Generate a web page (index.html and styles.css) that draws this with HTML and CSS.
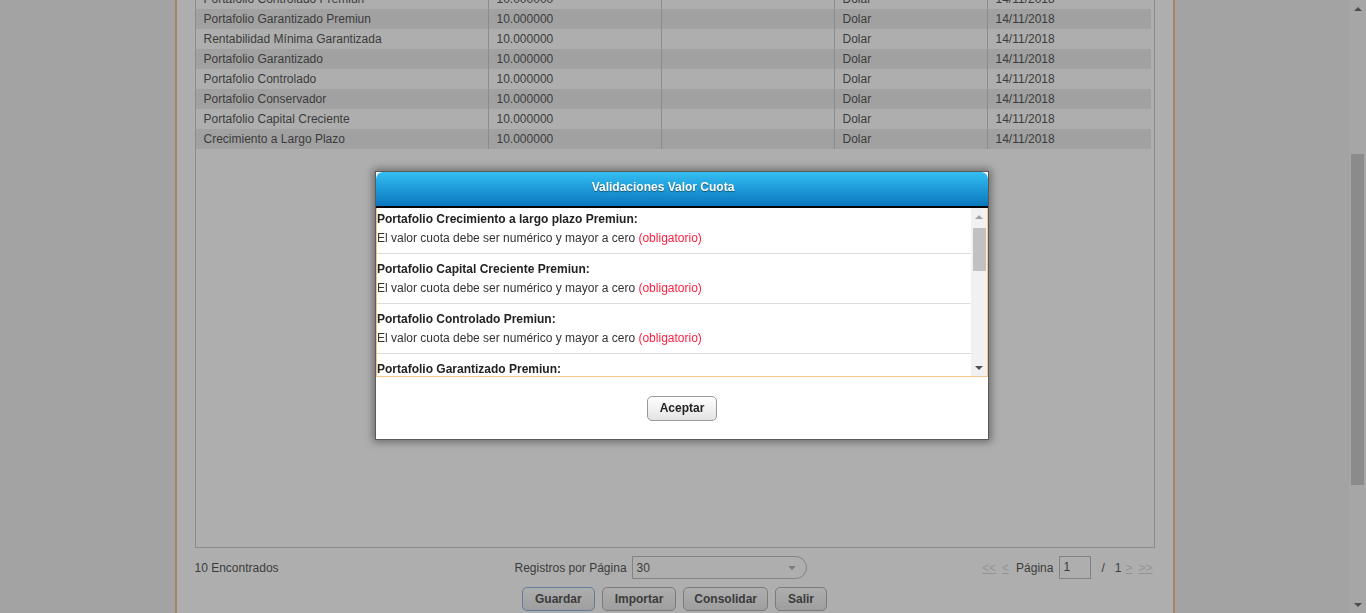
FILE: index.html
```html
<!DOCTYPE html>
<html lang="es">
<head>
<meta charset="utf-8">
<title>Valor Cuota</title>
<link rel="stylesheet" href="styles.css">
</head>
<body>
<div class="screen">
  <div class="viewport">
    <div class="container">
      <div class="grid-box">
        <table class="grid">
          <colgroup>
            <col class="c1"><col class="c2"><col class="c3"><col class="c4"><col class="c5">
          </colgroup>
          <tbody>
            <tr><td>Portafolio Controlado Premiun</td><td>10.000000</td><td></td><td>Dolar</td><td>14/11/2018</td></tr>
            <tr><td>Portafolio Garantizado Premiun</td><td>10.000000</td><td></td><td>Dolar</td><td>14/11/2018</td></tr>
            <tr><td>Rentabilidad Mínima Garantizada</td><td>10.000000</td><td></td><td>Dolar</td><td>14/11/2018</td></tr>
            <tr><td>Portafolio Garantizado</td><td>10.000000</td><td></td><td>Dolar</td><td>14/11/2018</td></tr>
            <tr><td>Portafolio Controlado</td><td>10.000000</td><td></td><td>Dolar</td><td>14/11/2018</td></tr>
            <tr><td>Portafolio Conservador</td><td>10.000000</td><td></td><td>Dolar</td><td>14/11/2018</td></tr>
            <tr><td>Portafolio Capital Creciente</td><td>10.000000</td><td></td><td>Dolar</td><td>14/11/2018</td></tr>
            <tr><td>Crecimiento a Largo Plazo</td><td>10.000000</td><td></td><td>Dolar</td><td>14/11/2018</td></tr>
          </tbody>
        </table>
      </div>

      <div class="bar">
        <div class="found">10 Encontrados</div>
        <div class="perpage">
          <span>Registros por Página</span>
          <div class="select"><span>30</span><span class="caret"></span></div>
        </div>
        <div class="pager">
          <a class="pl">&lt;&lt;</a>
          <a class="pl">&lt;</a>
          <span class="plabel">Página</span>
          <span class="pinput">1</span>
          <span class="slash">/</span>
          <span class="ptotal">1</span>
          <a class="pl">&gt;</a>
          <a class="pl">&gt;&gt;</a>
        </div>
      </div>

      <div class="actions">
        <button class="btn focus">Guardar</button>
        <button class="btn">Importar</button>
        <button class="btn btn-narrow">Consolidar</button>
        <button class="btn">Salir</button>
      </div>
    </div>
  </div>
  <div class="vscroll">
    <div class="vs-btn"><span class="arr-up"></span></div>
    <div class="vs-track"><div class="vs-thumb"></div></div>
    <div class="vs-btn"><span class="arr-down"></span></div>
  </div>
</div>

<div class="overlay"></div>

<div class="modal">
  <div class="modal-head">Validaciones Valor Cuota</div>
  <div class="modal-list">
    <div class="list-items">
      <div class="item"><div class="it">Portafolio Crecimiento a largo plazo Premiun:</div><div class="im">El valor cuota debe ser numérico y mayor a cero <span class="req">(obligatorio)</span></div></div>
      <div class="item"><div class="it">Portafolio Capital Creciente Premiun:</div><div class="im">El valor cuota debe ser numérico y mayor a cero <span class="req">(obligatorio)</span></div></div>
      <div class="item"><div class="it">Portafolio Controlado Premiun:</div><div class="im">El valor cuota debe ser numérico y mayor a cero <span class="req">(obligatorio)</span></div></div>
      <div class="item"><div class="it">Portafolio Garantizado Premiun:</div><div class="im">El valor cuota debe ser numérico y mayor a cero <span class="req">(obligatorio)</span></div></div>
      <div class="item"><div class="it">Rentabilidad Mínima Garantizada:</div><div class="im">El valor cuota debe ser numérico y mayor a cero <span class="req">(obligatorio)</span></div></div>
      <div class="item"><div class="it">Portafolio Garantizado:</div><div class="im">El valor cuota debe ser numérico y mayor a cero <span class="req">(obligatorio)</span></div></div>
      <div class="item"><div class="it">Portafolio Controlado:</div><div class="im">El valor cuota debe ser numérico y mayor a cero <span class="req">(obligatorio)</span></div></div>
      <div class="item"><div class="it">Portafolio Conservador:</div><div class="im">El valor cuota debe ser numérico y mayor a cero <span class="req">(obligatorio)</span></div></div>
      <div class="item"><div class="it">Portafolio Capital Creciente:</div><div class="im">El valor cuota debe ser numérico y mayor a cero <span class="req">(obligatorio)</span></div></div>
      <div class="item"><div class="it">Crecimiento a Largo Plazo:</div><div class="im">El valor cuota debe ser numérico y mayor a cero <span class="req">(obligatorio)</span></div></div>
    </div>
    <div class="list-scroll">
      <div class="ls-btn"><span class="ls-up"></span></div>
      <div class="ls-track"><div class="ls-thumb"></div></div>
      <div class="ls-btn"><span class="ls-down"></span></div>
    </div>
  </div>
  <div class="modal-foot">
    <button class="btn btn-ok">Aceptar</button>
  </div>
</div>
</body>
</html>
```

FILE: styles.css
```css
html, body {
  margin: 0;
  padding: 0;
}
body {
  font: 12px "Liberation Sans", Arial, sans-serif;
  color: #333;
  background: #ececec;
  overflow: hidden;
}
.screen {
  display: flex;
  height: 613px;
}
.viewport {
  flex: 1;
  overflow: hidden;
}
.container {
  width: 1000px;
  box-sizing: border-box;
  margin: 0 auto;
  background: #fff;
  border-left: 2px solid #f0b47c;
  border-right: 2px solid #f0b47c;
  padding: 0 18px 40px;
}
.grid-box {
  margin-top: -12px;
  height: 558px;
  border: 1px solid #c0c0c0;
}
.grid {
  table-layout: fixed;
  width: 955px;
  border-collapse: separate;
  border-spacing: 0;
}
.grid col.c1 { width: 293px; }
.grid col.c2 { width: 173px; }
.grid col.c3 { width: 173px; }
.grid col.c4 { width: 153px; }
.grid col.c5 { width: 163px; }
.grid td {
  height: 20px;
  padding: 0 8px;
  line-height: 20px;
  border-right: 1px solid #c3c3c3;
  white-space: nowrap;
  overflow: hidden;
}
.grid td:last-child {
  border-right: none;
}
.grid tr:nth-child(even) td {
  background: #e8e8e8;
}

.bar {
  display: grid;
  grid-template-columns: repeat(3, 1fr);
  align-items: center;
  height: 23px;
  margin-top: 8px;
}
.perpage {
  display: flex;
  align-items: center;
  gap: 5px;
}
.select {
  width: 175px;
  height: 23px;
  box-sizing: border-box;
  border: 1px solid #b0b0b0;
  border-radius: 0 12px 12px 0;
  display: flex;
  align-items: center;
  justify-content: space-between;
  padding: 0 10px 0 4px;
}
.caret {
  width: 0;
  height: 0;
  border-left: 4px solid transparent;
  border-right: 4px solid transparent;
  border-top: 4px solid #aaa;
}
.pager {
  justify-self: end;
  display: flex;
  align-items: center;
  padding-right: 2px;
}
.pl {
  color: #cfcfcf;
  text-decoration: underline;
  margin-right: 6px;
}
.pager .pl:last-child {
  margin-right: 0;
}
.plabel {
  margin: 0 6px 0 1px;
}
.pinput {
  width: 32px;
  height: 23px;
  box-sizing: border-box;
  border: 1px solid #b0b0b0;
  padding: 0 3px;
  line-height: 21px;
  margin-right: 10px;
}
.slash {
  margin-right: 10px;
}
.ptotal {
  margin-right: 4px;
}

.actions {
  display: flex;
  justify-content: center;
  gap: 7px;
  margin-top: 8px;
}
.btn {
  height: 24px;
  padding: 0 12px;
  border: 1px solid #a5a5a5;
  border-radius: 5px;
  background: linear-gradient(#ffffff, #e3e3e3);
  font: bold 12px "Liberation Sans", Arial, sans-serif;
  color: #333;
}
.btn-narrow {
  padding: 0 10px;
}
.btn.focus {
  border-color: #7aa7dc;
}

.vscroll {
  width: 17px;
  background: #f1f1f1;
  display: flex;
  flex-direction: column;
}
.vs-btn {
  height: 17px;
  display: flex;
  align-items: center;
  justify-content: center;
}
.vs-track {
  flex: 1;
}
.vs-thumb {
  margin: 137px 2px 0;
  height: 331px;
  background: #c1c1c1;
}
.arr-up, .arr-down, .ls-up, .ls-down {
  width: 0;
  height: 0;
  border-left: 4px solid transparent;
  border-right: 4px solid transparent;
}
.arr-up {
  border-bottom: 4px solid #505050;
}
.arr-down {
  border-top: 4px solid #505050;
}

.overlay {
  position: fixed;
  inset: 0;
  background: rgba(70, 70, 70, 0.44);
}

.modal {
  position: fixed;
  top: 171px;
  left: 50%;
  margin-left: -308px;
  width: 612px;
  background: #fff;
  border: 1px solid #5a5a5a;
  box-shadow: 0 0 8px 2px rgba(0, 0, 0, 0.4);
}
.modal-head {
  height: 34px;
  line-height: 31px;
  padding-right: 38px;
  text-align: center;
  border-radius: 7px 7px 0 0;
  background: linear-gradient(#33bff3, #0a76bd);
  border-bottom: 2px solid #050505;
  color: #fff;
  font-weight: bold;
  text-shadow: 0 1px 1px rgba(0, 0, 0, 0.45);
}
.modal-list {
  height: 169px;
  box-sizing: border-box;
  display: flex;
  border: 1px solid #f8c68c;
  border-top: none;
}
.list-items {
  flex: 1;
  overflow: hidden;
}
.list-scroll {
  width: 16px;
  background: #f1f1f1;
  display: flex;
  flex-direction: column;
}
.ls-btn {
  height: 17px;
  display: flex;
  align-items: center;
  justify-content: center;
}
.ls-up {
  border-bottom: 4px solid #a3a3a3;
}
.ls-down {
  border-top: 4px solid #505050;
}
.ls-track {
  flex: 1;
}
.ls-thumb {
  margin: 3px 1px 0 2px;
  height: 43px;
  background: #c1c1c1;
}
.item {
  padding: 6px 0 5px;
  border-bottom: 1px solid #dcdcdc;
}
.item:first-child {
  padding-top: 2px;
}
.it {
  font-weight: bold;
  color: #222;
  line-height: 19px;
}
.im {
  line-height: 19px;
  color: #333;
}
.req {
  color: #ff1f40;
}
.modal-foot {
  height: 62px;
  display: flex;
  align-items: center;
  justify-content: center;
}
.btn-ok {
  height: 25px;
  border-color: #999;
  color: #222;
}
```
